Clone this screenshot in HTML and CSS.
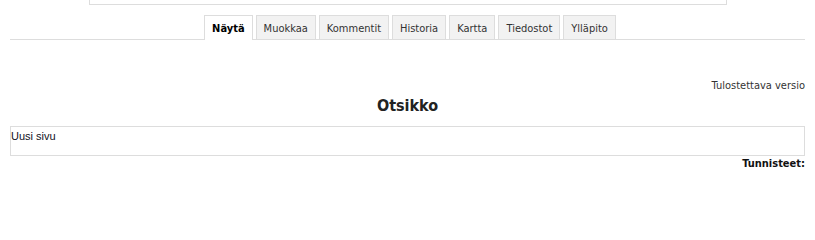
FILE: index.html
```html
<!DOCTYPE html>
<html lang="fi">
<head>
<meta charset="utf-8">
<title>Otsikko</title>
<link rel="stylesheet" href="styles.css">
</head>
<body>
<div class="page">
  <div class="topbox"></div>
  <ul class="tabs">
    <li class="tab active">Näytä</li>
    <li class="tab">Muokkaa</li>
    <li class="tab">Kommentit</li>
    <li class="tab">Historia</li>
    <li class="tab">Kartta</li>
    <li class="tab">Tiedostot</li>
    <li class="tab">Ylläpito</li>
  </ul>
  <div class="print">Tulostettava versio</div>
  <h1 class="title">Otsikko</h1>
  <div class="content">Uusi sivu</div>
  <div class="tags">Tunnisteet:</div>
</div>
</body>
</html>
```

FILE: styles.css
```css
html, body {
  margin: 0;
  padding: 0;
  background: #fff;
}
.page {
  padding: 0 10px 0 10px;
  font-family: "DejaVu Sans Condensed", "DejaVu Sans", sans-serif;
  font-size: 11px;
  color: #333;
}
.topbox {
  width: 636px;
  height: 4px;
  margin-left: 79px;
  border: 1px solid #ddd;
  border-top: none;
}
.tabs {
  list-style: none;
  margin: 10px 0 0 0;
  padding: 0 0 0 5px;
  display: flex;
  justify-content: center;
  gap: 3px;
  border-bottom: 1px solid #ddd;
}
.tab {
  height: 23px;
  line-height: 25px;
  padding: 0 7px;
  border: 1px solid #ddd;
  border-bottom: none;
  background: #f2f2f2;
  color: #333;
}
.tab.active {
  background: #fff;
  color: #000;
  font-weight: bold;
  height: 24px;
  margin-bottom: -1px;
}
.print {
  margin-top: 39px;
  text-align: right;
  line-height: 14px;
  color: #333;
}
.title {
  margin: 3px 0 0 0;
  text-align: center;
  font-size: 16px;
  line-height: 20px;
  font-weight: bold;
  color: #222;
}
.content {
  margin-top: 10px;
  height: 26px;
  padding: 2px 1px 0 0;
  border: 1px solid #ddd;
  font-family: "Liberation Sans", Arial, sans-serif;
  font-size: 11px;
  line-height: 14px;
  color: #111122;
}
.tags {
  margin-top: 1px;
  text-align: right;
  font-weight: bold;
  line-height: 14px;
  color: #111;
}
```
